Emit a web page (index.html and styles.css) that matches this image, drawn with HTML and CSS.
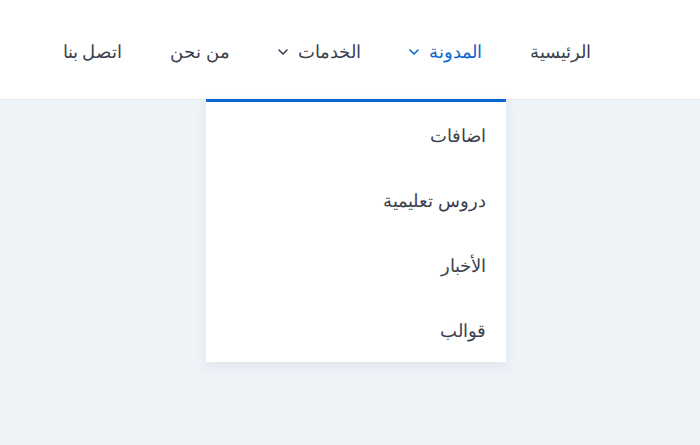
FILE: index.html
```html
<!DOCTYPE html>
<html lang="ar" dir="rtl">
<head>
<meta charset="utf-8">
<link rel="stylesheet" href="styles.css">
</head>
<body>
<header class="header">
  <nav class="nav">
    <ul class="menu">
      <li class="item"><a class="link" href="#">الرئيسية</a></li>
      <li class="item active">
        <a class="link" href="#"><span>المدونة</span><svg class="chev" viewBox="0 0 10 6" width="10" height="6"><path d="M1 1l4 4 4-4" fill="none" stroke="currentColor" stroke-width="1.6" stroke-linecap="round" stroke-linejoin="round"/></svg></a>
        <ul class="dropdown">
          <li><a class="sub" href="#">اضافات</a></li>
          <li><a class="sub" href="#">دروس تعليمية</a></li>
          <li><a class="sub" href="#">الأخبار</a></li>
          <li><a class="sub" href="#">قوالب</a></li>
        </ul>
      </li>
      <li class="item">
        <a class="link" href="#"><span>الخدمات</span><svg class="chev" viewBox="0 0 10 6" width="10" height="6"><path d="M1 1l4 4 4-4" fill="none" stroke="currentColor" stroke-width="1.6" stroke-linecap="round" stroke-linejoin="round"/></svg></a>
      </li>
      <li class="item"><a class="link" href="#">من نحن</a></li>
      <li class="item"><a class="link" href="#">اتصل بنا</a></li>
    </ul>
  </nav>
</header>
</body>
</html>
```
FILE: styles.css
```css
* { box-sizing: border-box; }
html, body { margin: 0; padding: 0; }
body {
  background: #eef3f8;
  font-family: "Noto Sans", sans-serif;
  color: #3a414d;
  height: 445px;
}
.header {
  background: #ffffff;
  height: 100px;
  border-bottom: 1px solid #e4e8ee;
}
.nav {
  padding-right: 85px;
  height: 99px;
}
.menu {
  list-style: none;
  margin: 0;
  padding: 0;
  display: flex;
  height: 99px;
}
.item {
  position: relative;
  display: flex;
  align-items: center;
}
.link {
  display: flex;
  align-items: center;
  gap: 10px;
  padding: 2px 24px 0;
  color: #3a414d;
  text-decoration: none;
  font-size: 18px;
  height: 99px;
}
.active > .link { color: #0a66d0; }
.chev { display: block; margin-top: 2px; }
.dropdown {
  position: absolute;
  top: 99px;
  right: 0;
  width: 300px;
  margin: 0;
  padding: 0;
  list-style: none;
  background: #ffffff;
  border-top: 3px solid #0a66d0;
  box-shadow: 0 4px 12px rgba(30, 50, 80, 0.08);
}
.sub {
  display: block;
  padding: 2px 20px 0;
  height: 65px;
  line-height: 63px;
  color: #3a414d;
  text-decoration: none;
  font-size: 18px;
}
```
